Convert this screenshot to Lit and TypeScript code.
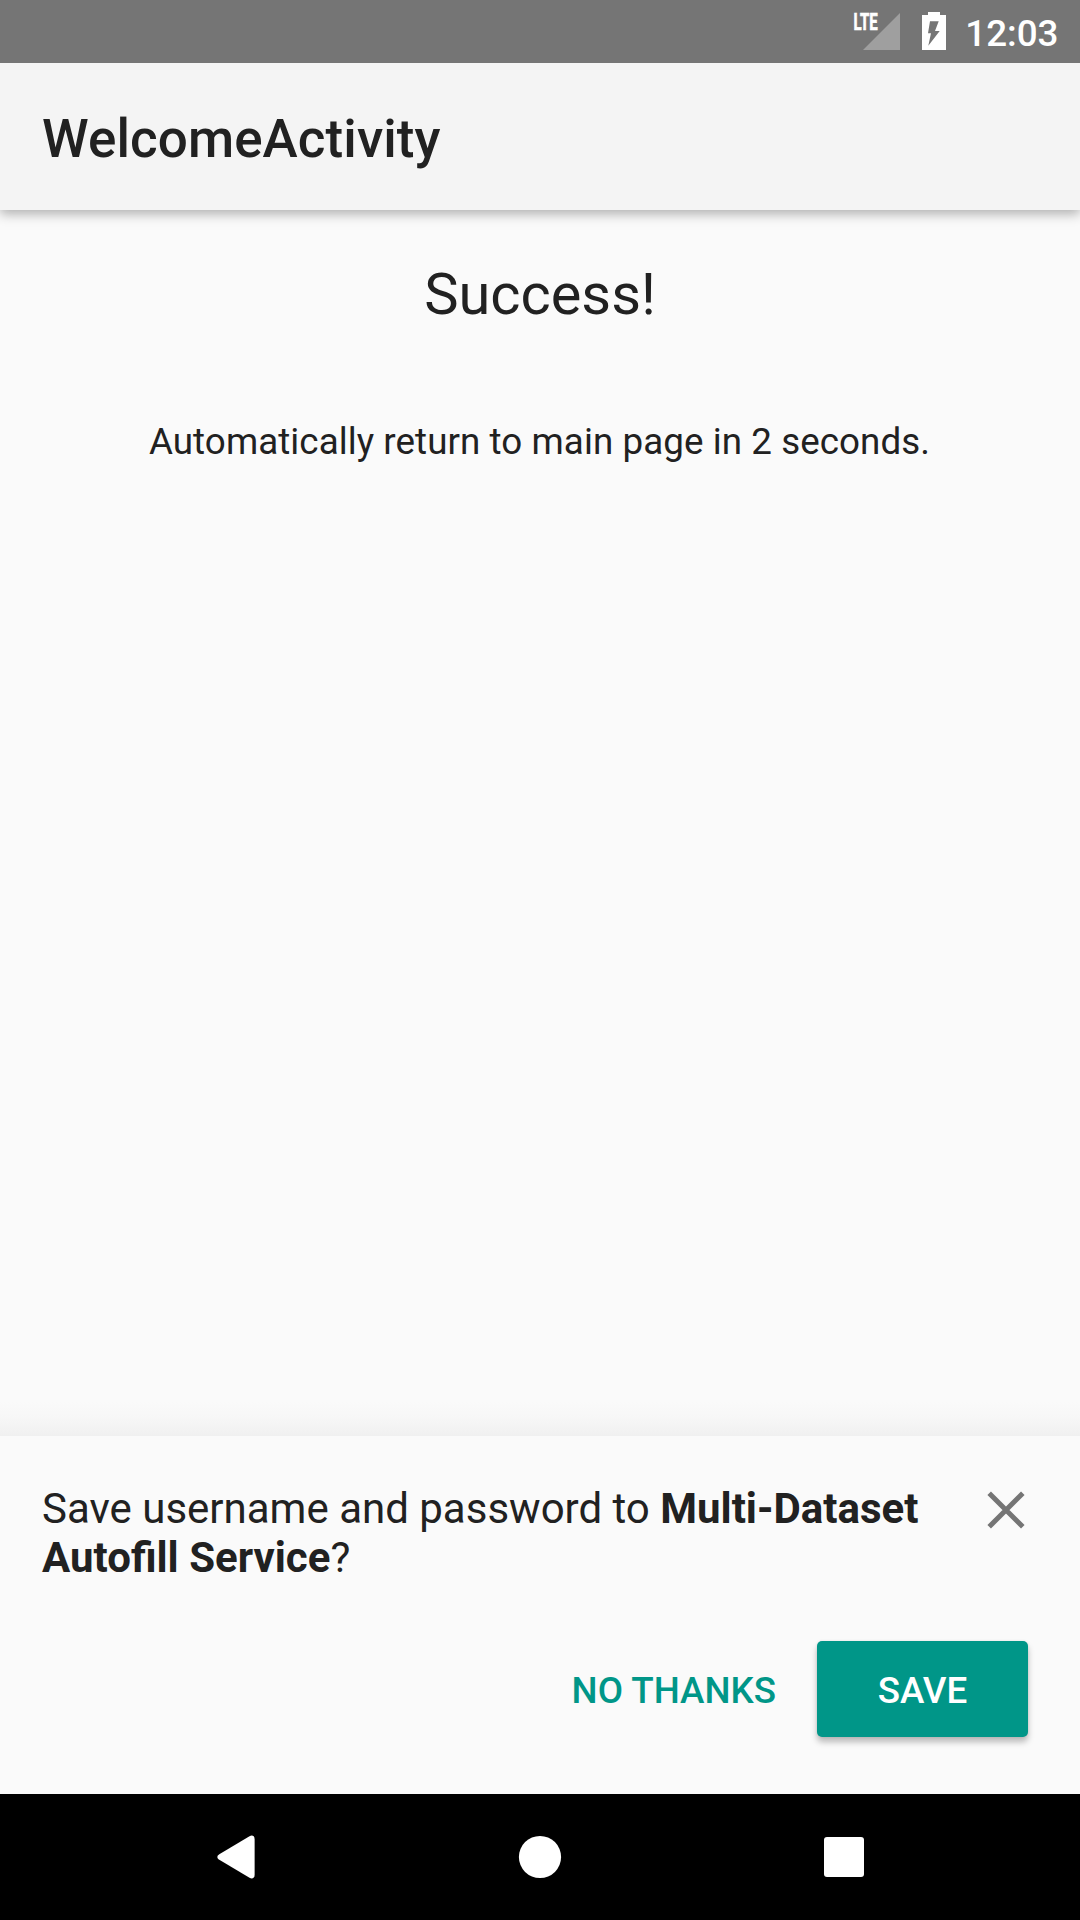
import { LitElement, html, css, svg } from "lit";
import { customElement, property, state } from "lit/decorators.js";

@customElement("status-bar")
class StatusBar extends LitElement {
  @property() time = "";

  static styles = css`
    :host {
      display: flex;
      justify-content: flex-end;
      height: 63px;
      background: #757575;
      color: #fff;
    }
    .signal {
      width: 50px;
      height: 63px;
      margin-right: 20px;
    }
    .battery {
      width: 26px;
      height: 63px;
      margin-right: 18.5px;
    }
    .lte {
      font: 700 23px Roboto, sans-serif;
      stroke: #fff;
      stroke-width: 0.7px;
    }
    .clock {
      font: 500 36.75px/43px Roboto, sans-serif;
      padding: 12px 21.5px 0 0;
      height: 43px;
    }
  `;

  render() {
    return html`
      <svg class="signal" viewBox="0 0 50 63" fill="#fff">
        <path d="M49 13V50H12Z" fill="#9f9f9f" />
        <text class="lte" transform="translate(2.6 30) scale(.65 1)">LTE</text>
      </svg>
      <svg class="battery" viewBox="0 0 26 63">
        <path
          fill="#fff"
          fill-rule="evenodd"
          d="M7 12H19V15H25V50H1V15H7ZM9 21.2H17.7L14 31H18.7L7.3 45.7L10 33.3H7Z"
        />
      </svg>
      <div class="clock">${this.time}</div>
    `;
  }
}

@customElement("save-sheet")
class SaveSheet extends LitElement {
  @property() service = "";

  static styles = css`
    :host {
      display: flex;
      flex-direction: column;
      gap: 59px;
      height: 358px;
      box-sizing: border-box;
      padding: 48px 52px 0 42px;
      background: #fafafa;
      color: #212121;
      font-family: Roboto, sans-serif;
    }
    .message {
      display: flex;
      justify-content: space-between;
      align-items: flex-start;
    }
    .text {
      width: 890px;
      margin: 0;
      font-size: 42px;
      line-height: 49px;
    }
    .close {
      display: flex;
      padding: 6.5px 3px 0 0;
    }
    .actions {
      display: flex;
      justify-content: flex-end;
      gap: 41px;
    }
    .btn {
      margin: 0;
      padding: 2px 0 0;
      border: 0;
      height: 96px;
      background: none;
      color: #009688;
      font: 500 36.75px/43px Roboto, sans-serif;
      text-transform: uppercase;
    }
    .primary {
      width: 211px;
      border-radius: 5px;
      background: #009688;
      color: #fff;
      box-shadow: 0 5px 6px rgba(0, 0, 0, 0.26), 0 0 3px rgba(0, 0, 0, 0.08);
    }
  `;

  render() {
    return html`
      <div class="message">
        <p class="text">
          Save username and password to <b>${this.service}</b>?
        </p>
        <div class="close">
          <svg width="38" height="38" viewBox="0 0 38 38">
            <path d="M2.2 2.2L35.8 35.8M35.8 2.2L2.2 35.8" stroke="#757575" stroke-width="5" />
          </svg>
        </div>
      </div>
      <div class="actions">
        <button class="btn">No thanks</button>
        <button class="btn primary">Save</button>
      </div>
    `;
  }
}

@customElement("nav-bar")
class NavBar extends LitElement {
  static styles = css`
    :host {
      display: flex;
      justify-content: space-between;
      align-items: center;
      box-sizing: border-box;
      height: 126px;
      padding: 0 212px;
      background: #000;
    }
    .icon {
      width: 48px;
      height: 48px;
      fill: #fff;
    }
  `;

  private icon(shape: unknown) {
    return html`<svg class="icon" viewBox="0 0 48 48">${shape}</svg>`;
  }

  render() {
    return html`
      ${this.icon(svg`<path d="M37.5 3.2C40 1.8 42.6 2.8 42.6 6V42C42.6 45.2 40 46.2 37.5 44.8L7.3 26.8C4.7 25.2 4.7 22.8 7.3 21.2Z" />`)}
      ${this.icon(svg`<circle cx="24" cy="24" r="21.1" />`)}
      ${this.icon(svg`<rect x="4" y="4" width="40" height="40" rx="3" />`)}
    `;
  }
}

@customElement("app-root")
class AppRoot extends LitElement {
  @state() private seconds = 2;

  static styles = css`
    :host {
      display: flex;
      flex-direction: column;
      width: 1080px;
      height: 1920px;
      overflow: hidden;
      background: #fafafa;
      color: #212121;
      font-family: Roboto, sans-serif;
    }
    .toolbar {
      box-sizing: border-box;
      height: 147px;
      padding: 46px 42px 0;
      background: #f4f4f4;
      font-size: 53px;
      font-weight: 500;
      letter-spacing: 0.08px;
      line-height: 61px;
      box-shadow: 0 4px 11px rgba(0, 0, 0, 0.3);
      clip-path: inset(0 0 -24px 0);
    }
    .content {
      flex: 1;
      display: flex;
      flex-direction: column;
      align-items: center;
      gap: 92px;
      padding-top: 50px;
    }
    .headline {
      font-size: 57.75px;
      line-height: 68px;
    }
    .note {
      font-size: 36.75px;
      line-height: 43px;
      letter-spacing: 0.07px;
      padding-right: 1px;
    }
    .fade {
      height: 34px;
      background: linear-gradient(#fafafa, #f7f7f7 45%, #f0f0f0);
    }
  `;

  render() {
    return html`
      <status-bar time="12:03"></status-bar>
      <div class="toolbar">WelcomeActivity</div>
      <div class="content">
        <div class="headline">Success!</div>
        <div class="note">Automatically return to main page in ${this.seconds} seconds.</div>
      </div>
      <div class="fade"></div>
      <save-sheet service="Multi-Dataset Autofill Service"></save-sheet>
      <nav-bar></nav-bar>
    `;
  }
}
